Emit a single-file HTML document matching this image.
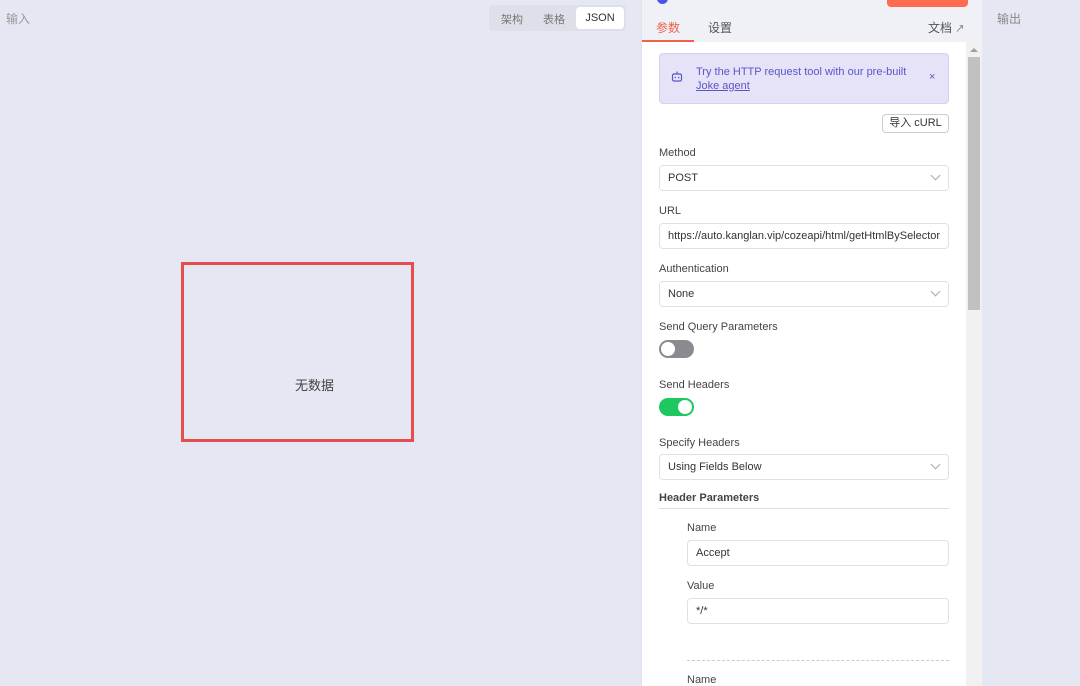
<!DOCTYPE html>
<html><head><meta charset="utf-8"><style>
*{box-sizing:border-box;margin:0;padding:0}
body{width:1080px;height:686px;overflow:hidden;background:#e5e8f2;font-family:"Liberation Sans","Noto Sans CJK SC",sans-serif;position:relative;color:#333}
.a{position:absolute}
.lbl{position:absolute;font-size:11px;color:#444;left:659px}
.inp{position:absolute;left:659px;width:290px;height:26px;border:1px solid #dfe1e6;border-radius:4px;background:#fff;font-size:11px;color:#333;padding-left:8px;line-height:24px;white-space:nowrap;overflow:hidden}
.chev{position:absolute;right:9px;top:6px;width:7px;height:7px;border-right:1px solid #aaa;border-bottom:1px solid #aaa;transform:rotate(45deg)}
</style></head><body>
<div class="a" style="left:6px;top:10px;font-size:12px;color:#999">输入</div>
<div class="a" style="left:489px;top:5px;width:137px;height:26px;background:#dde0e8;border-radius:4px"></div>
<div class="a" style="left:501px;top:11px;font-size:11px;color:#777">架构</div>
<div class="a" style="left:543px;top:11px;font-size:11px;color:#777">表格</div>
<div class="a" style="left:576px;top:7px;width:48px;height:22px;background:#fff;border-radius:4px;font-size:11px;color:#333;text-align:center;line-height:22px">JSON</div>
<div class="a" style="left:181px;top:262px;width:233px;height:180px;border:3px solid #e84d4d"></div>
<div class="a" style="left:295px;top:375px;font-size:13px;color:#444">无数据</div>
<div class="a" style="left:997px;top:10px;font-size:12px;color:#888">输出</div>

<div class="a" style="left:641px;top:0;width:341px;height:686px;background:#f0f1f6;border-left:1px solid #dfe2ec"></div>
<div class="a" style="left:657px;top:-7px;width:11px;height:11px;border-radius:50%;background:#4d53e8"></div>
<div class="a" style="left:887px;top:-4px;width:81px;height:11px;border-radius:4px;background:#ff6b52"></div>
<div class="a" style="left:656px;top:19px;font-size:12px;color:#f0614a">参数</div>
<div class="a" style="left:642px;top:40px;width:52px;height:2px;background:#f0614a"></div>
<div class="a" style="left:708px;top:19px;font-size:12px;color:#555">设置</div>
<div class="a" style="left:928px;top:19px;font-size:12px;color:#555">文档 <span style="font-size:9px">↗</span></div>
<div class="a" style="left:642px;top:42px;width:324px;height:644px;background:#fff"></div>
<div class="a" style="left:966px;top:42px;width:16px;height:644px;background:#f1f1f1"></div>
<div class="a" style="left:968px;top:57px;width:12px;height:253px;background:#c1c1c1"></div>
<div class="a" style="left:970px;top:48px;width:0;height:0;border-left:4px solid transparent;border-right:4px solid transparent;border-bottom:4px solid #a0a0a0"></div>

<div class="a" style="left:659px;top:53px;width:290px;height:51px;background:#e6e3f8;border:1px solid #d5d0f2;border-radius:4px"></div>
<svg class="a" style="left:671px;top:71px" width="12" height="11" viewBox="0 0 12 11"><rect x="1.5" y="3" width="9" height="7" rx="1.5" fill="none" stroke="#5a55c8" stroke-width="1.2"/><line x1="6" y1="0.5" x2="6" y2="3" stroke="#5a55c8" stroke-width="1.2"/><circle cx="4.3" cy="6.5" r=".8" fill="#5a55c8"/><circle cx="7.7" cy="6.5" r=".8" fill="#5a55c8"/></svg>
<div class="a" style="left:696px;top:65px;font-size:11px;color:#5a55c8;line-height:14px">Try the HTTP request tool with our pre-built<br><span style="text-decoration:underline">Joke agent</span></div>
<div class="a" style="left:929px;top:71px;font-size:11px;color:#5a55c8">×</div>
<div class="a" style="left:882px;top:114px;width:67px;height:19px;border:1px solid #ccc;border-radius:4px;font-size:11px;text-align:center;line-height:17px;color:#333">导入 cURL</div>

<div class="lbl" style="top:147px">Method</div>
<div class="inp" style="top:165px">POST<span class="chev"></span></div>
<div class="lbl" style="top:205px">URL</div>
<div class="inp" style="top:223px">https://auto.kanglan.vip/cozeapi/html/getHtmlBySelector</div>
<div class="lbl" style="top:263px">Authentication</div>
<div class="inp" style="top:281px">None<span class="chev"></span></div>
<div class="lbl" style="top:321px">Send Query Parameters</div>
<div class="a" style="left:659px;top:340px;width:35px;height:18px;border-radius:9px;background:#8a8a90"></div>
<div class="a" style="left:661px;top:342px;width:14px;height:14px;border-radius:50%;background:#fff"></div>
<div class="lbl" style="top:379px">Send Headers</div>
<div class="a" style="left:659px;top:398px;width:35px;height:18px;border-radius:9px;background:#1fc85f"></div>
<div class="a" style="left:678px;top:400px;width:14px;height:14px;border-radius:50%;background:#fff"></div>
<div class="lbl" style="top:437px">Specify Headers</div>
<div class="inp" style="top:454px">Using Fields Below<span class="chev"></span></div>
<div class="lbl" style="top:492px;font-weight:bold;color:#444">Header Parameters</div>
<div class="a" style="left:659px;top:508px;width:290px;height:1px;background:#dde0e8"></div>
<div class="lbl" style="left:687px;top:522px">Name</div>
<div class="inp" style="left:687px;width:262px;top:540px">Accept</div>
<div class="lbl" style="left:687px;top:580px">Value</div>
<div class="inp" style="left:687px;width:262px;top:598px">*/*</div>
<div class="a" style="left:687px;top:660px;width:262px;border-top:1px dashed #ccc"></div>
<div class="lbl" style="left:687px;top:674px">Name</div>
</body></html>
